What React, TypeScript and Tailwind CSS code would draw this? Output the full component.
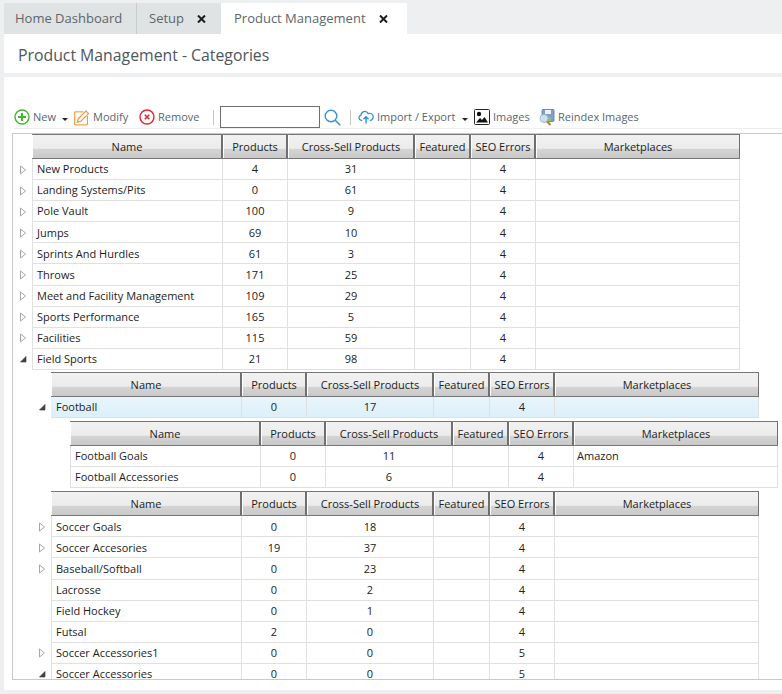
import { ReactNode } from "react";

const COLS = [
  "w-[191px]",
  "w-[65px]",
  "w-[127px]",
  "w-[56px]",
  "w-[65px]",
  "w-[204px]",
];
const HEADERS = ["Name", "Products", "Cross-Sell Products", "Featured", "SEO Errors", "Marketplaces"];
const INDENT = ["ml-0", "ml-[19px]", "ml-[38px]"];

type Toggle = "open" | "closed" | "none";

type RowData = {
  name: string;
  products: number;
  crossSell: number;
  seo: number;
  market?: string;
  toggle?: Toggle;
};

const TOP_ROWS: RowData[] = [
  { name: "New Products", products: 4, crossSell: 31, seo: 4 },
  { name: "Landing Systems/Pits", products: 0, crossSell: 61, seo: 4 },
  { name: "Pole Vault", products: 100, crossSell: 9, seo: 4 },
  { name: "Jumps", products: 69, crossSell: 10, seo: 4 },
  { name: "Sprints And Hurdles", products: 61, crossSell: 3, seo: 4 },
  { name: "Throws", products: 171, crossSell: 25, seo: 4 },
  { name: "Meet and Facility Management", products: 109, crossSell: 29, seo: 4 },
  { name: "Sports Performance", products: 165, crossSell: 5, seo: 4 },
  { name: "Facilities", products: 115, crossSell: 59, seo: 4 },
  { name: "Field Sports", products: 21, crossSell: 98, seo: 4, toggle: "open" },
];

const FOOTBALL_ROWS: RowData[] = [
  { name: "Football Goals", products: 0, crossSell: 11, seo: 4, market: "Amazon", toggle: "none" },
  { name: "Football Accessories", products: 0, crossSell: 6, seo: 4, toggle: "none" },
];

const SOCCER_ROWS: RowData[] = [
  { name: "Soccer Goals", products: 0, crossSell: 18, seo: 4 },
  { name: "Soccer Accesories", products: 19, crossSell: 37, seo: 4 },
  { name: "Baseball/Softball", products: 0, crossSell: 23, seo: 4 },
  { name: "Lacrosse", products: 0, crossSell: 2, seo: 4, toggle: "none" },
  { name: "Field Hockey", products: 0, crossSell: 1, seo: 4, toggle: "none" },
  { name: "Futsal", products: 2, crossSell: 0, seo: 4, toggle: "none" },
  { name: "Soccer Accessories1", products: 0, crossSell: 0, seo: 5 },
  { name: "Soccer Accessories", products: 0, crossSell: 0, seo: 5, toggle: "open" },
];

function Expander({ toggle }: { toggle: Toggle }) {
  if (toggle === "none") return null;
  if (toggle === "open") {
    return (
      <svg width="8" height="8" viewBox="0 0 8 8">
        <path d="M7 1.5V7H1.5z" fill="#444" stroke="#333" strokeWidth="0.6" />
      </svg>
    );
  }
  return (
    <svg width="8" height="10" viewBox="0 0 8 10">
      <path d="M1.5 1v8L6.5 5z" fill="#fff" stroke="#a6a6a6" />
    </svg>
  );
}

function CloseIcon() {
  return (
    <svg className="ml-[13px] mt-px" width="9" height="8" viewBox="0 0 9 8">
      <path d="M1 .5l7 7M8 .5l-7 7" stroke="#1c1c1c" strokeWidth="2" />
    </svg>
  );
}

function HeaderRow({ depth, className = "" }: { depth: number; className?: string }) {
  return (
    <div className={`flex pl-[19px] ${INDENT[depth]} ${className}`}>
      <div className="box-border flex h-[25px] border-y border-l border-[#777]">
        {HEADERS.map((h, i) => (
          <div
            key={h}
            className={`${COLS[i]} ${i === 0 ? "-ml-px" : ""} flex items-center justify-center whitespace-nowrap border-l border-r-2 border-l-white border-r-[#6f6f6f] bg-[linear-gradient(#f1f1f1_0%,#ececec_58%,#d4d4d4_62%,#c9c9c9_100%)] pt-[2px] text-[#1c1c1c] last:border-r`}
          >
            {h}
          </div>
        ))}
      </div>
    </div>
  );
}

function Row({ row, depth, selected }: { row: RowData; depth: number; selected?: boolean }) {
  const cell = `flex h-full items-center border-b border-r border-[#e0e0e0] pt-px ${
    selected ? "border-[#d6e6ee] bg-[linear-gradient(#e8f5fc,#dcf0fb)]" : ""
  }`;
  return (
    <div className={`flex h-[21.1px] ${INDENT[depth]}`}>
      <div className="flex w-[19px] items-center justify-center">
        <Expander toggle={row.toggle ?? "closed"} />
      </div>
      <div className="flex h-full border-l border-[#e0e0e0]">
        <div className={`${cell} ${COLS[0]} -ml-px pl-[5px] text-[#1c1c1c]`}>{row.name}</div>
        <div className={`${cell} ${COLS[1]} justify-center`}>{row.products}</div>
        <div className={`${cell} ${COLS[2]} justify-center`}>{row.crossSell}</div>
        <div className={`${cell} ${COLS[3]}`} />
        <div className={`${cell} ${COLS[4]} justify-center`}>{row.seo}</div>
        <div className={`${cell} ${COLS[5]} pl-[3px]`}>{row.market}</div>
      </div>
    </div>
  );
}

function Tool({
  icon,
  label,
  className,
  caret,
}: {
  icon: ReactNode;
  label: string;
  className: string;
  caret?: boolean;
}) {
  return (
    <div className={`flex items-center whitespace-nowrap ${className}`}>
      <span className="flex w-[16px] shrink-0 justify-center">{icon}</span>
      <span className="ml-[3px] text-[#5a6672]">{label}</span>
      {caret && (
        <span className="absolute right-[1px] top-[9px] h-0 w-0 border-x-[3px] border-t-[3px] border-x-transparent border-t-[#222]" />
      )}
    </div>
  );
}

function Sep({ className }: { className: string }) {
  return <div className={`h-[15px] w-px shrink-0 bg-[#c4c4c4] ${className}`} />;
}

export default function App() {
  return (
    <div className="h-[694px] w-[782px] overflow-hidden bg-[#eeeff0] pl-[4px] pt-[3px] font-['Open_Sans','Noto_Sans',sans-serif] text-[11px] text-[#222]">
      {/* tabs */}
      <div className="flex h-[31px] text-[13px]">
        <div className="flex w-[133px] items-center border-r border-[#c3cdcd] bg-[#dfe3e3] pl-[11px] text-[#5c666c]">
          Home Dashboard
        </div>
        <div className="flex w-[84px] items-center bg-[#dfe3e3] pl-[12px] text-[#5c666c]">
          Setup
          <CloseIcon />
        </div>
        <div className="flex w-[186px] items-center bg-white pl-[13px] text-[#5c666c]">
          Product Management
          <CloseIcon />
        </div>
      </div>

      <div className="h-[656px] bg-white">
        <div className="flex h-[39px] items-center pl-[14px] pt-[4px] text-[15.8px] text-[#4c565e]">
          Product Management - Categories
        </div>
        <div className="h-[4px] bg-[#eeeff0]" />

        {/* toolbar */}
        <div className="ml-[10px] mt-[28px] flex h-[24px] items-center border-b border-[#eeeeee] pt-[1px]">
          <Tool
            className="relative w-[55px]"
            label="New"
            caret
            icon={
              <svg width="16" height="16" viewBox="0 0 16 16">
                <circle cx="8" cy="8" r="7" fill="#fff" stroke="#46b52f" strokeWidth="1.4" />
                <path d="M8 4v8M4 8h8" stroke="#46b52f" strokeWidth="2" />
              </svg>
            }
          />
          <Tool
            className="ml-[5px] w-[65px]"
            label="Modify"
            icon={
              <svg width="17" height="17" viewBox="0 0 17 17" fill="none" stroke="#f28a1e">
                <path d="M10 2.5H.7v13.8h13.6V7" />
                <path d="M3.5 13.5l1-3.6L12.7 1.5l2.8 2.8-8.3 8.2z" strokeWidth="1.1" fill="#fff" />
              </svg>
            }
          />
          <Tool
            className="w-[74px]"
            label="Remove"
            icon={
              <svg width="16" height="16" viewBox="0 0 16 16">
                <circle cx="8" cy="8" r="7" fill="#fff" stroke="#e8232f" strokeWidth="1.4" />
                <path d="M5.8 5.8l4.4 4.4M10.2 5.8l-4.4 4.4" stroke="#e8232f" strokeWidth="1.6" />
              </svg>
            }
          />
          <Sep className="" />
          <div className="ml-[6px] h-[22px] w-[100px] shrink-0 border border-[#6f6f6f] bg-white" />
          <svg className="ml-[4px] shrink-0" width="17" height="17" viewBox="0 0 17 17" fill="none" stroke="#3a8fd8">
            <circle cx="7" cy="7" r="5.8" strokeWidth="1.4" />
            <path d="M11.2 11.2l5 5" strokeWidth="1.6" />
          </svg>
          <Sep className="ml-[9px]" />
          <Tool
            className="relative ml-[7px] w-[111px]"
            label="Import / Export"
            caret
            icon={
              <svg width="17" height="16" viewBox="0 0 17 16" fill="none" stroke="#2f8fe0" strokeWidth="1.3">
                <path d="M4.5 11.5H3.5a2.8 2.8 0 0 1-.3-5.5 4 4 0 0 1 7.6-1.6 3.2 3.2 0 0 1 3 7.1h-1.3" />
                <path d="M8.5 15V8M5.8 10.5l2.7-2.7 2.7 2.7" strokeWidth="1.5" />
              </svg>
            }
          />
          <Tool
            className="ml-[5px] w-[65px]"
            label="Images"
            icon={
              <svg width="16" height="16" viewBox="0 0 16 16">
                <rect x="0.5" y="0.5" width="15" height="15" rx="1" fill="#fff" stroke="#222" />
                <circle cx="5" cy="5" r="2.2" fill="#111" />
                <path d="M2 13.5l4-4.5 2 2 2.5-3 3.5 5.5z" fill="#111" />
              </svg>
            }
          />
          <Tool
            className=""
            label="Reindex Images"
            icon={
              <svg width="16" height="17" viewBox="0 0 16 17">
                <rect x="3" y="0.5" width="12" height="12" rx="1" fill="#7f9fc7" stroke="#6a8ab4" />
                <rect x="6" y="1" width="6" height="4" fill="#eef3f8" />
                <rect x="6" y="8" width="6" height="4" fill="#8fc46f" />
                <circle cx="5" cy="9.5" r="4" fill="#d6e6f4" fillOpacity="0.9" stroke="#9db8d4" />
                <path d="M8 12.5l3.5 3.5" stroke="#b9793c" strokeWidth="2" />
              </svg>
            }
          />
        </div>

        {/* grid */}
        <div className="ml-[8px] mt-[4px] h-[547px] overflow-hidden border-b border-l border-t border-[#c8c8c8]">
          <HeaderRow depth={0} />
          {TOP_ROWS.map((r) => (
            <Row key={r.name} row={r} depth={0} />
          ))}
          <HeaderRow depth={1} className="mt-[2px]" />
          <Row row={{ name: "Football", products: 0, crossSell: 17, seo: 4, toggle: "open" }} depth={1} selected />
          <HeaderRow depth={2} className="mt-[3px]" />
          {FOOTBALL_ROWS.map((r) => (
            <Row key={r.name} row={r} depth={2} />
          ))}
          <HeaderRow depth={1} className="mt-[3px]" />
          {SOCCER_ROWS.map((r) => (
            <Row key={r.name} row={r} depth={1} />
          ))}
        </div>
      </div>
    </div>
  );
}
